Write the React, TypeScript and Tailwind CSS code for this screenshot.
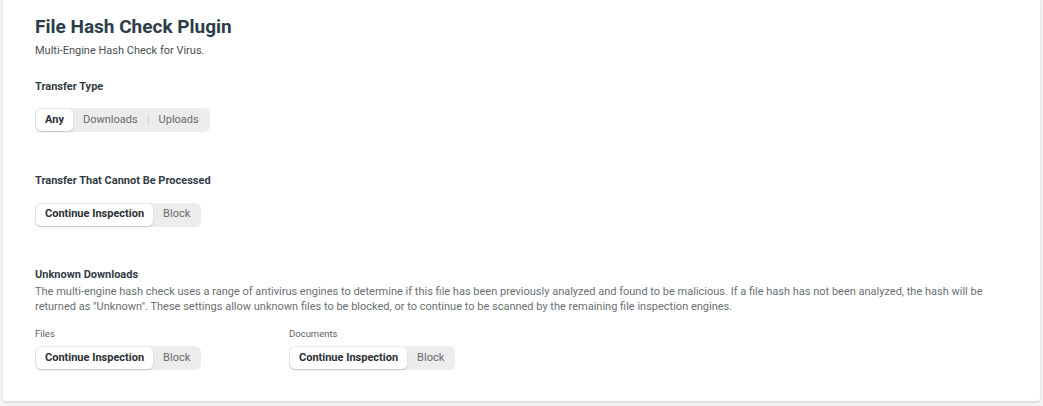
import React, { useState } from 'react';

type SegProps = {
  options: string[];
  value: string;
  onChange: (v: string) => void;
};

const Segmented: React.FC<SegProps> = ({ options, value, onChange }) => {
  return (
    <div className="inline-flex h-[24px] items-stretch rounded-[6px] bg-[#ececec] p-[1px]">
      {options.map((opt, i) => {
        const active = opt === value;
        const prevActive = i > 0 && options[i - 1] === value;
        const showSep = i > 0 && !active && !prevActive;
        return (
          <div key={opt} className="flex items-center">
            {showSep && <span className="h-[12px] w-px bg-[#d4d4d4]" />}
            <button
              onClick={() => onChange(opt)}
              className={
                active
                  ? 'flex h-full items-center rounded-[5px] bg-white px-[9px] text-[11px] font-bold text-[#2b2f33] shadow-[0_1px_2px_rgba(0,0,0,0.18)]'
                  : 'flex h-full items-center px-[10px] text-[11px] text-[#666a6e]'
              }
            >
              {opt}
            </button>
          </div>
        );
      })}
    </div>
  );
};

export default function App() {
  const [transferType, setTransferType] = useState('Any');
  const [unprocessed, setUnprocessed] = useState('Continue Inspection');
  const [files, setFiles] = useState('Continue Inspection');
  const [documents, setDocuments] = useState('Continue Inspection');

  return (
    <div className="min-h-[406px] w-full bg-[#f3f4f5] px-[3px] font-['Roboto','Liberation_Sans',sans-serif]">
      <div className="rounded-b-[3px] bg-white pt-[15px] pb-[31px] pl-[32px] pr-[32px] shadow-[0_1px_3px_rgba(0,0,0,0.15)]">
        <h1 className="text-[19px] leading-[24px] font-bold text-[#2c3d4a]">File Hash Check Plugin</h1>
        <p className="mt-[5px] text-[11px] leading-[14px] text-[#4a4f54]">Multi-Engine Hash Check for Virus.</p>

        {/* Transfer type */}
        <h2 className="mt-[22px] text-[11px] leading-[14px] font-bold text-[#333c45]">Transfer Type</h2>
        <div className="mt-[12px]">
          <Segmented options={['Any', 'Downloads', 'Uploads']} value={transferType} onChange={setTransferType} />
        </div>

        {/* Unprocessable transfers */}
        <h2 className="mt-[42px] text-[11px] leading-[14px] font-bold text-[#333c45]">Transfer That Cannot Be Processed</h2>
        <div className="mt-[12px]">
          <Segmented options={['Continue Inspection', 'Block']} value={unprocessed} onChange={setUnprocessed} />
        </div>

        {/* Unknown downloads */}
        <h2 className="mt-[41px] text-[11px] leading-[14px] font-bold text-[#333c45]">Unknown Downloads</h2>
        <p className="mt-[2px] text-[11px] leading-[15px] text-[#6b6f73]">
          The multi-engine hash check uses a range of antivirus engines to determine if this file has been previously analyzed and found to be malicious. If a file hash has not been analyzed, the hash will be returned as "Unknown". These settings allow unknown files to be blocked, or to continue to be scanned by the remaining file inspection engines.
        </p>

        <div className="mt-[13px] flex">
          <div className="w-[254px]">
            <div className="text-[9.5px] leading-[14px] text-[#5d6267]">Files</div>
            <div className="mt-[3px]">
              <Segmented options={['Continue Inspection', 'Block']} value={files} onChange={setFiles} />
            </div>
          </div>
          <div>
            <div className="text-[9.5px] leading-[14px] text-[#5d6267]">Documents</div>
            <div className="mt-[3px]">
              <Segmented options={['Continue Inspection', 'Block']} value={documents} onChange={setDocuments} />
            </div>
          </div>
        </div>
      </div>
    </div>
  );
}
